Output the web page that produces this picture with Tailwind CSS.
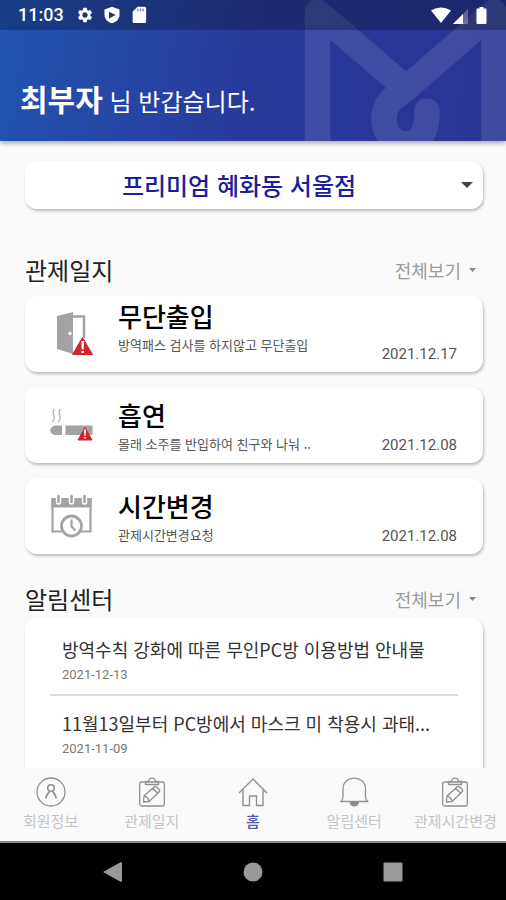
<!DOCTYPE html>
<html lang="ko">
<head>
<meta charset="utf-8">
<meta name="viewport" content="width=device-width, initial-scale=1">
<title>홈</title>
<script src="https://cdn.jsdelivr.net/npm/@tailwindcss/browser@4"></script>
</head>
<body class="flex h-screen flex-col bg-[#fafafa] font-['Noto_Sans_CJK_KR',sans-serif] text-[#222]">

<header class="relative z-10 shrink-0 bg-linear-100 from-[#2153b1] via-[#283a9b] via-50% to-[#283593] text-white shadow-[0_2px_5px_rgba(0,0,0,0.35)]">
  <svg class="absolute right-0 top-0 h-full" viewBox="300 0 206 141" fill="none" stroke="#fff" stroke-width="25.5" stroke-linecap="round" stroke-linejoin="round" opacity=".1" aria-hidden="true">
    <path d="M317.5 160V12L406 88"/>
    <path d="M494 160V12L403 91C390 100 384 106 384 118C384 134 394 144 406 144C418 144 427 135 427 111"/>
  </svg>
  <!-- Status bar -->
  <div class="relative flex h-[30px] items-center bg-black/25 px-[18px]">
    <span class="font-['Roboto',sans-serif] text-[18px] leading-6 font-medium">11:03</span>
    <svg class="ml-3 size-[18px]" viewBox="0 0 24 24" fill="#fff" aria-hidden="true"><path d="M19.14 12.94c.04-.3.06-.61.06-.94 0-.32-.02-.64-.07-.94l2.03-1.58c.18-.14.23-.41.12-.61l-1.92-3.32c-.12-.22-.37-.29-.59-.22l-2.39.96c-.5-.38-1.03-.7-1.62-.94l-.36-2.54c-.04-.24-.24-.41-.48-.41h-3.84c-.24 0-.43.17-.47.41l-.36 2.54c-.59.24-1.13.57-1.62.94l-2.39-.96c-.22-.08-.47 0-.59.22L2.74 8.87c-.12.21-.08.47.12.61l2.03 1.58c-.05.3-.09.63-.09.94s.02.64.07.94l-2.03 1.58c-.18.14-.23.41-.12.61l1.92 3.32c.12.22.37.29.59.22l2.39-.96c.5.38 1.03.7 1.62.94l.36 2.54c.05.24.24.41.48.41h3.84c.24 0 .44-.17.47-.41l.36-2.54c.59-.24 1.13-.56 1.62-.94l2.39.96c.22.08.47 0 .59-.22l1.92-3.32c.12-.22.07-.47-.12-.61l-2.01-1.58zM12 15.6c-1.98 0-3.6-1.62-3.6-3.6s1.62-3.6 3.6-3.6 3.6 1.62 3.6 3.6-1.62 3.6-3.6 3.6z"/></svg>
    <svg class="ml-[9px] size-[18px]" viewBox="0 0 24 24" fill="#fff" fill-rule="evenodd" aria-hidden="true"><path d="M12 1L2 4.500v7c0 5.500 4.400 9.800 10 11.500 5.600-1.700 10-6 10-11.500v-7zM8 7.500l9 4.500-9 4.500z"/></svg>
    <svg class="ml-[9px] size-[18px]" viewBox="0 0 24 24" aria-hidden="true"><path fill="#fff" d="M18.500 1H10L3.500 7.500v13a2 2 0 0 0 2 2H19.500a2 2 0 0 0 2-2V3a2 2 0 0 0-2-2z"/><path fill="#283a7a" opacity=".6" d="M9.500 3.500h2v3.500h-2zm3.500 0h2v3.500h-2zm3.500 0h2v3.500h-2z"/></svg>
    <svg class="ml-auto h-[17px] w-[57px]" viewBox="0 0 57 17" fill="#fff" aria-hidden="true">
      <path d="M0 3.500Q10-2.500 20 3.500L10 16z"/>
      <path d="M22 17L37 2V17z" opacity=".3"/><path d="M22 17L32 7V17z"/>
      <path d="M48.500 0h4v1.500h2a1 1 0 0 1 1 1v13.500a1 1 0 0 1-1 1h-8a1 1 0 0 1-1-1V2.500a1 1 0 0 1 1-1h2z"/>
    </svg>
  </div>
  <h1 class="relative flex h-[111px] items-center px-5 pt-6 text-2xl font-normal"><span><strong class="text-[30px] leading-10 font-bold">최부자</strong> 님 반갑습니다.</span></h1>
</header>

<main class="min-h-0 flex-1 overflow-y-auto px-[25px] pt-5 pr-[23px] [scrollbar-width:none]">
  <div class="relative">
    <select aria-label="지점 선택" class="block h-12 w-full appearance-none rounded-xl bg-white pr-[30px] text-2xl font-medium text-[#1b1f9c] shadow-[1px_2px_3px_rgba(0,0,0,0.25)] [text-align-last:center]">
      <option>프리미엄 혜화동 서울점</option>
    </select>
    <svg class="pointer-events-none absolute right-[10px] top-[21px] h-[6px] w-3" viewBox="0 0 12 6" fill="#444" aria-hidden="true"><path d="M0 0h12L6 6z"/></svg>
  </div>

  <section class="mt-[45px]">
    <div class="mb-[10px] flex h-8 items-center justify-between">
      <h2 class="text-2xl">관제일지</h2>
      <a href="#" class="flex items-center gap-2 pr-[7px] text-lg text-[#9b9b9b]">전체보기
        <svg class="h-1 w-[7px]" viewBox="0 0 7 4" fill="#888" aria-hidden="true"><path d="M0 0h7L3.500 4z"/></svg></a>
    </div>
    <ul class="flex flex-col gap-[15px]">
      <li class="flex h-[76px] items-center rounded-xl bg-white pr-[26px] pl-[25px] shadow-[1px_2px_3px_rgba(0,0,0,0.25)]">
        <svg class="h-11 w-[44px] shrink-0" viewBox="0 0 44 44" aria-hidden="true">
          <path d="M22 4.500H34V26" fill="none" stroke="#a3a3a3" stroke-width="2.500"/>
          <path d="M7 4L23 0V42L7 37z" fill="#a3a3a3"/><circle cx="20" cy="21.500" r="1.700" fill="#fff"/>
          <path d="M32.500 25.500L42.500 42.500H22.500z" fill="#d4242b" stroke="#d4242b" stroke-linejoin="round"/>
          <path d="M31.300 29h2.800l-.5 8.500h-1.800zM31.400 39h2.600v2h-2.600z" fill="#fff"/>
        </svg>
        <div class="ml-6 min-w-0 flex-1 pb-4">
          <h3 class="text-[26px] leading-[38px] font-medium text-black">무단출입</h3>
          <p class="truncate text-[13px] leading-5 text-[#555]">방역패스 검사를 하지않고 무단출입</p>
        </div>
        <time datetime="2021-12-17" class="self-end pb-2 font-['Roboto',sans-serif] text-[15px] leading-5 text-[#555]">2021.12.17</time>
      </li>
      <li class="flex h-[76px] items-center rounded-xl bg-white pr-[26px] pl-[25px] shadow-[1px_2px_3px_rgba(0,0,0,0.25)]">
        <svg class="h-11 w-[44px] shrink-0" viewBox="0 0 44 44" aria-hidden="true">
          <path d="M4.500 6c-5 5 4 7.500-2.500 13M10.500 6c-5 5 4 7.500-2.500 13" fill="none" stroke="#aaa" stroke-width="1.200"/>
          <path d="M12 22.500V32H5C2 31.500 .5 29 0 27.500C.5 25.500 2 23 5 22.500zM15.500 22.500H42.500V32H15.500z" fill="#a3a3a3"/>
          <path d="M35 24.500L42 37H28z" fill="#d4242b" stroke="#d4242b" stroke-linejoin="round"/>
          <path d="M34 26.500h2l-.4 6.500h-1.200zM34.100 34h1.800v1.500h-1.800z" fill="#fff"/>
        </svg>
        <div class="ml-6 min-w-0 flex-1">
          <h3 class="text-[26px] leading-[38px] font-medium text-black">흡연</h3>
          <p class="truncate text-[13px] leading-5 text-[#555]">몰래 소주를 반입하여 친구와 나눠 ..</p>
        </div>
        <time datetime="2021-12-08" class="self-end pb-2 font-['Roboto',sans-serif] text-[15px] leading-5 text-[#555]">2021.12.08</time>
      </li>
      <li class="flex h-[76px] items-center rounded-xl bg-white pr-[26px] pl-[25px] shadow-[1px_2px_3px_rgba(0,0,0,0.25)]">
        <svg class="h-11 w-[44px] shrink-0" viewBox="0 0 44 44" fill="none" aria-hidden="true">
          <path d="M12 37.500H2.500V5H40.500V37.500H31" stroke="#a3a3a3" stroke-width="2.200"/>
          <path d="M1.400 4H41.600V13.500H1.400z" fill="#a3a3a3"/>
          <path d="M8.500 1V8M21.500 1V8M34.500 1V8" stroke="#fff" stroke-width="5.500" stroke-linecap="round"/>
          <path d="M8.500 2V8M21.500 2V8M34.500 2V8" stroke="#a3a3a3" stroke-width="2.500" stroke-linecap="round"/>
          <circle cx="21.500" cy="32" r="10" stroke="#a3a3a3" stroke-width="2.800" fill="#fff"/>
          <path d="M21.500 25.500V32.500L25.500 36.500" stroke="#a3a3a3" stroke-width="2.200"/>
        </svg>
        <div class="ml-6 min-w-0 flex-1">
          <h3 class="text-[26px] leading-[38px] font-medium text-black">시간변경</h3>
          <p class="truncate text-[13px] leading-5 text-[#555]">관제시간변경요청</p>
        </div>
        <time datetime="2021-12-08" class="self-end pb-2 font-['Roboto',sans-serif] text-[15px] leading-5 text-[#555]">2021.12.08</time>
      </li>
    </ul>
  </section>

  <section class="mt-[29px]">
    <div class="mb-[3px] flex h-8 items-center justify-between">
      <h2 class="text-2xl">알림센터</h2>
      <a href="#" class="flex items-center gap-2 pr-[7px] text-lg text-[#9b9b9b]">전체보기
        <svg class="h-1 w-[7px]" viewBox="0 0 7 4" fill="#888" aria-hidden="true"><path d="M0 0h7L3.500 4z"/></svg></a>
    </div>
    <ul class="rounded-xl bg-white px-[25px] pt-1 pb-6 shadow-[1px_2px_3px_rgba(0,0,0,0.25)]">
      <li class="border-b-2 border-[#dcdcdc] px-3 pt-[13px] pb-[9px]">
        <h3 class="truncate text-[18px] leading-7 text-[#333]">방역수칙 강화에 따른 무인PC방 이용방법 안내물</h3>
        <time datetime="2021-12-13" class="mt-[2px] block font-['Roboto',sans-serif] text-[13px] leading-5 text-[#777]">2021-12-13</time>
      </li>
      <li class="px-3 pt-[13px] pb-[9px]">
        <h3 class="truncate text-[18px] leading-7 text-[#333]">11월13일부터 PC방에서 마스크 미 착용시 과태...</h3>
        <time datetime="2021-11-09" class="mt-[2px] block font-['Roboto',sans-serif] text-[13px] leading-5 text-[#777]">2021-11-09</time>
      </li>
    </ul>
  </section>
</main>

<nav aria-label="주 메뉴" class="grid shrink-0 grid-cols-5 border-b-2 border-[#888] bg-[#fafafa] py-2 text-center text-[15px] leading-6 whitespace-nowrap text-[#c4c4c4]">
  <a href="#" class="flex flex-col items-center gap-px">
    <svg class="size-8" viewBox="0 0 32 32" fill="none" stroke="#909090" stroke-width="1.300" aria-hidden="true"><circle cx="16" cy="16" r="14"/><circle cx="16" cy="12" r="3.300" stroke-width="1.600"/><path d="M10.800 22.500C10.800 19 13 17.500 14.500 15.500M21.200 22.500C21.200 19 19 17.500 17.500 15.500" stroke-width="1.800"/></svg>
    회원정보</a>
  <a href="#" class="flex flex-col items-center gap-px">
    <svg class="size-8" viewBox="0 0 32 32" fill="none" stroke="#909090" stroke-width="1.300" stroke-linejoin="round" aria-hidden="true"><rect x="3.700" y="6" width="24.600" height="24" rx="2"/><path d="M9.500 8.500V5.500H12.500C13 1 19 1 19.500 5.500H22.500V8.500z"/><path d="M8 20L18.500 10.500C20 9.500 24.500 14 23.500 15.500L13 25.500L7.500 26zM8 20C10 20 13 23 13 25.500M16.500 12.200L21.700 17.200"/></svg>
    관제일지</a>
  <a href="#" aria-current="page" class="flex flex-col items-center gap-px font-medium text-[#5457a8]">
    <svg class="size-8" viewBox="0 0 32 32" fill="none" stroke="#909090" stroke-width="1.400" aria-hidden="true"><path d="M2 17L16 3L30 17M6 14V29.500H12.500V20H19.500V29.500H26V14"/></svg>
    홈</a>
  <a href="#" class="flex flex-col items-center gap-px">
    <svg class="size-8" viewBox="0 0 32 32" fill="none" stroke="#909090" stroke-width="1.300" stroke-linejoin="round" aria-hidden="true"><path d="M2.500 25.500C4.500 24.500 5 22.500 5 20V13C5 -1.500 27.500 -1.500 27.500 13V20C27.500 22.500 28 24.500 30 25.500z"/><path d="M11.500 26H21C20.500 32 12 32 11.500 26z" fill="#8a8a8a" stroke="none"/></svg>
    알림센터</a>
  <a href="#" class="flex flex-col items-center gap-px">
    <svg class="size-8" viewBox="0 0 32 32" fill="none" stroke="#909090" stroke-width="1.300" stroke-linejoin="round" aria-hidden="true"><rect x="3.700" y="6" width="24.600" height="24" rx="2"/><path d="M9.500 8.500V5.500H12.500C13 1 19 1 19.500 5.500H22.500V8.500z"/><path d="M8 20L18.500 10.500C20 9.500 24.500 14 23.500 15.500L13 25.500L7.500 26zM8 20C10 20 13 23 13 25.500M16.500 12.200L21.700 17.200"/></svg>
    관제시간변경</a>
</nav>

<!-- System navigation -->
<div class="flex h-[57px] shrink-0 items-center justify-center gap-30 bg-black">
  <button type="button" aria-label="뒤로" class="size-5"><svg viewBox="0 0 20 20" fill="#999"><path d="M0 10L18 0Q19 0 19 1V19Q19 20 18 20z"/></svg></button>
  <button type="button" aria-label="홈 화면" class="size-5"><svg viewBox="0 0 20 20" fill="#999"><circle cx="10" cy="10" r="9.500"/></svg></button>
  <button type="button" aria-label="최근 앱" class="size-5"><svg viewBox="0 0 20 20" fill="#999"><rect x=".5" y=".5" width="19" height="19" rx="1"/></svg></button>
</div>
</body>
</html>
